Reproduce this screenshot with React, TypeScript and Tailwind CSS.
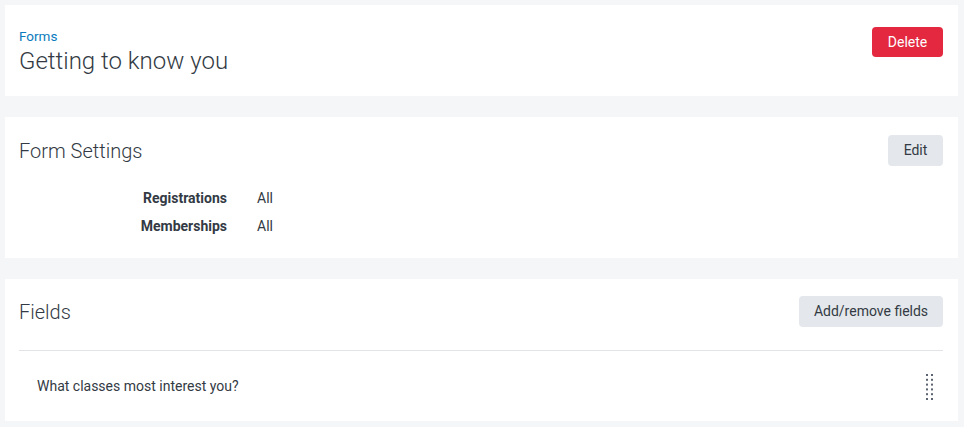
import React from "react";

function DragHandle() {
  const rows = [0, 1, 2, 3, 4, 5];
  return (
    <svg width="8" height="28" viewBox="0 0 8 28" className="block mt-[4px]">
      {rows.map((r) => (
        <g key={r} fill="#5b6470">
          <rect x="0" y={r * 4.8} width="2" height="2" />
          <rect x="5" y={r * 4.8} width="2" height="2" />
        </g>
      ))}
    </svg>
  );
}

export default function App() {
  return (
    <div
      className="min-h-[427px] bg-[#f5f6f8] pl-[5px] pr-[6px] pt-[5px] pb-[6px] flex flex-col gap-[21px] text-[#333a44]"
      style={{ fontFamily: "Roboto, 'Noto Sans', sans-serif" }}
    >
      {/* Header card */}
      <div className="bg-white h-[91px] pl-[14px] pr-[15px] flex items-start justify-between">
        <div className="pt-[23px] flex flex-col">
          <span className="text-[13.5px] leading-[16px] text-[#0b7bbd]">Forms</span>
          <span className="text-[24px] leading-[30px] mt-[2px] font-light text-[#333a44]">Getting to know you</span>
        </div>
        <button className="mt-[22px] h-[30px] w-[71px] rounded-[4px] bg-[#e3283f] text-white text-[14px]">
          Delete
        </button>
      </div>

      {/* Form settings */}
      <div className="bg-white h-[141px] pl-[14px] pr-[15px] pt-[18px]">
        <div className="flex items-center justify-between">
          <span className="text-[20px] leading-[24px] font-light text-[#333a44]">Form Settings</span>
          <button className="h-[31px] w-[55px] rounded-[4px] bg-[#e4e7eb] text-[14px] text-[#333a44]">
            Edit
          </button>
        </div>
        <div className="mt-[24px] grid grid-cols-[208px_auto] gap-x-[30px] gap-y-[12px] text-[14px] leading-[16px]">
          <span className="text-right font-bold text-[#333a44]">Registrations</span>
          <span>All</span>
          <span className="text-right font-bold text-[#333a44]">Memberships</span>
          <span>All</span>
        </div>
      </div>

      {/* Fields */}
      <div className="bg-white h-[142px] pl-[14px] pr-[15px] pt-[17px]">
        <div className="flex items-center justify-between pb-[23px] border-b border-[#e1e3e6]">
          <span className="text-[20px] leading-[24px] font-light text-[#333a44]">Fields</span>
          <button className="h-[31px] w-[144px] rounded-[4px] bg-[#e4e7eb] text-[14px] text-[#333a44]">
            Add/remove fields
          </button>
        </div>
        <div className="h-[70px] pl-[18px] pr-[9px] flex items-center justify-between">
          <span className="text-[14px] font-normal text-[#333a44]">What classes most interest you?</span>
          <DragHandle />
        </div>
      </div>
    </div>
  );
}
